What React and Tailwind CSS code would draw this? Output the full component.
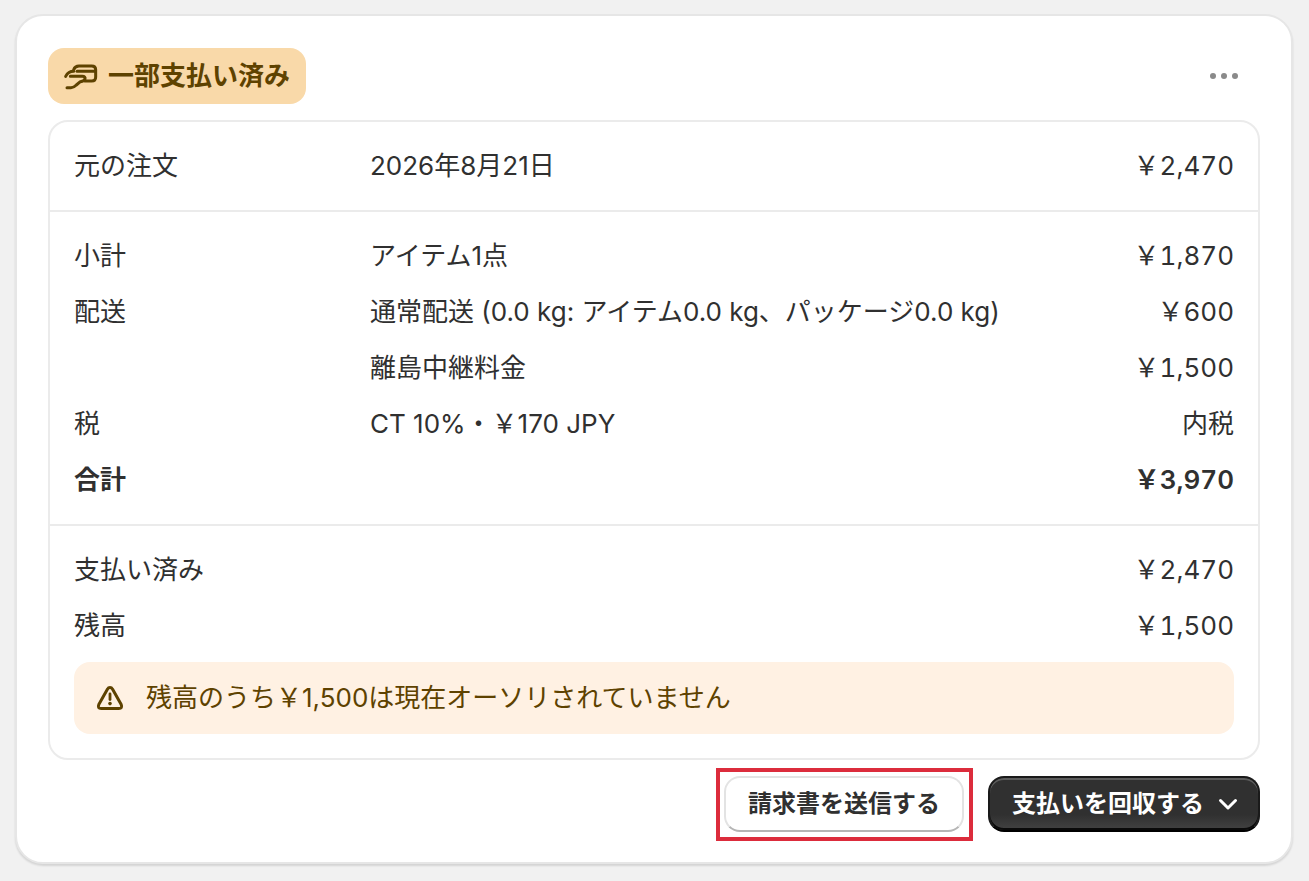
function Row({ label, mid, value, bold }) {
  return (
    <div className={`grid grid-cols-[296px_1fr_auto] h-10 items-center ${bold ? "font-semibold" : ""}`}>
      <div>{label}</div>
      <div>{mid}</div>
      <div className="text-right tabular-nums">{value}</div>
    </div>
  );
}

function HandIcon() {
  return (
    <svg width="36" height="28" viewBox="20 15 108 84" fill="none" stroke="#5e4200" strokeWidth="9" strokeLinecap="round" strokeLinejoin="round">
      <path d="M52 38 Q56 27 68 27 H106 Q118 27 118 38 V60 Q118 72 106 72 H85" />
      <path d="M62 43 H116" />
      <path d="M28 58 Q36 43 52 43" />
      <path d="M42 58 H78 Q88 58 86 66 Q84 72 72 74 L60 84 Q52 92 44 92 H32" />
    </svg>
  );
}

export default function App() {
  return (
    <div className="min-h-[881px] bg-[#f1f1f1] pl-[15px] pr-4 pt-[14px] text-[26px] leading-10 text-[#303030] font-['Inter','Noto_Sans_CJK_JP',sans-serif]">
      <div className="h-[850px] rounded-[28px] border-2 border-[#e6e6e6] bg-white px-[31px] pt-8 shadow-[0_2px_2px_rgba(0,0,0,0.12)]">
        <div className="flex items-start justify-between">
          <div className="flex h-14 w-[258px] items-center gap-[9px] rounded-2xl bg-[#f9d9a9] pl-[15px] font-semibold text-[#5e4200]">
            <HandIcon />
            <span>一部支払い済み</span>
          </div>
          <div className="mr-[22px] mt-[25px] flex gap-[5px]">
            <span className="size-[6px] rounded-full bg-[#8a8a8a]" />
            <span className="size-[6px] rounded-full bg-[#8a8a8a]" />
            <span className="size-[6px] rounded-full bg-[#8a8a8a]" />
          </div>
        </div>

        <div className="mt-4 rounded-[20px] border-2 border-[#ebebeb]">
          <div className="border-b-2 border-[#ebebeb] p-6">
            <Row label="元の注文" mid="2026年8月21日" value="￥2,470" />
          </div>
          <div className="flex flex-col gap-4 border-b-2 border-[#ebebeb] p-6">
            <Row label="小計" mid="アイテム1点" value="￥1,870" />
            <Row label="配送" mid="通常配送 (0.0 kg: アイテム0.0 kg、パッケージ0.0 kg)" value="￥600" />
            <Row label="" mid="離島中継料金" value="￥1,500" />
            <Row label="税" mid="CT 10%・￥170 JPY" value="内税" />
            <Row label="合計" mid="" value="￥3,970" bold />
          </div>
          <div className="flex flex-col gap-4 p-6">
            <Row label="支払い済み" mid="" value="￥2,470" />
            <Row label="残高" mid="" value="￥1,500" />
            <div className="flex h-[72px] items-center gap-[22px] rounded-2xl bg-[#fff1e3] pl-[22px] text-[#5e4200]">
              <svg width="28" height="28" viewBox="0 0 28 28" fill="none">
                <path d="M14 3.5 Q15.6 3.5 16.6 5.2 L25.2 20.6 Q26.8 24.5 22.8 24.5 H5.2 Q1.2 24.5 2.8 20.6 L11.4 5.2 Q12.4 3.5 14 3.5 Z" stroke="#5e4200" strokeWidth="3" strokeLinejoin="round" />
                <path d="M14 10 V15.5" stroke="#5e4200" strokeWidth="2.8" strokeLinecap="round" />
                <circle cx="14" cy="19.6" r="1.8" fill="#5e4200" />
              </svg>
              <span>残高のうち￥1,500は現在オーソリされていません</span>
            </div>
          </div>
        </div>

        <div className="mt-4 flex items-center justify-end gap-6">
          <div className="relative">
            <button className="flex h-14 w-[240px] items-center justify-center rounded-2xl border-2 border-[#e3e3e3] border-b-[#b5b5b5] bg-white text-[24px] font-semibold text-[#303030]">
              請求書を送信する
            </button>
            <div className="absolute -left-2 -right-[9px] -top-2 -bottom-[9px] border-[4px] border-[#dc2c3c]" />
          </div>
          <button className="flex h-14 w-[272px] items-center gap-3 rounded-2xl border-2 border-[#1a1a1a] border-b-[#000000] bg-[linear-gradient(#303030_70%,#424242)] pl-[22px] text-[24px] font-semibold text-white shadow-[inset_0_2px_0_#5c5c5c,inset_0_-2px_0_#0a0a0a]">
            <span>支払いを回収する</span>
            <svg width="24" height="24" viewBox="0 0 24 24" fill="none" stroke="#fff" strokeWidth="3" strokeLinecap="round" strokeLinejoin="round">
              <path d="M4.5 8.5 L12 16 L19.5 8.5" />
            </svg>
          </button>
        </div>
      </div>
    </div>
  );
}
